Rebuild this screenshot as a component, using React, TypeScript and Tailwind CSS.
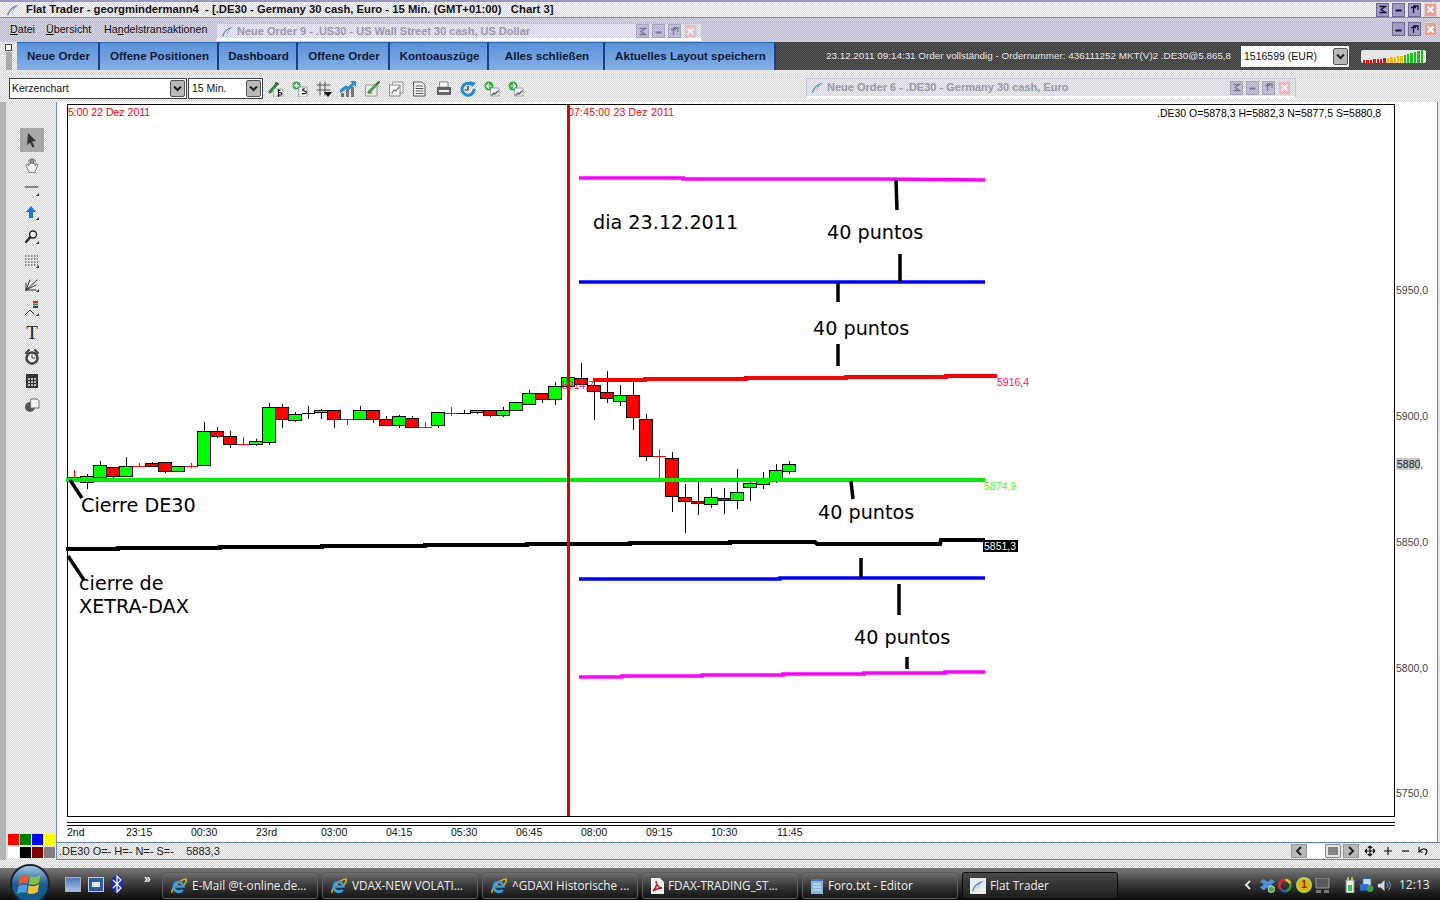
import React from "react";

const dGray = "bg-[image:repeating-conic-gradient(#d4d4d4_0_25%,#f6f6f6_0_50%)] bg-[length:2px_2px]";
const dLav = "bg-[image:repeating-conic-gradient(#b4b4d6_0_25%,#dcdcec_0_50%)] bg-[length:2px_2px]";
const dTitle = "bg-[image:repeating-conic-gradient(#d6d6e4_0_25%,#fafafc_0_50%)] bg-[length:2px_2px]";
const dMini = "bg-[image:repeating-conic-gradient(#d0d0e0_0_25%,#f0f0f6_0_50%)] bg-[length:2px_2px]";
const dDark = "bg-[image:repeating-conic-gradient(#383838_0_25%,#5c5c5c_0_50%)] bg-[length:2px_2px]";
const sans = "font-['Liberation_Sans',Arial,sans-serif]";

const Z5: number[][] = [
  [43, 352, 352, 330, 352, 2], [82, 349, 367, 342, 386, 1], [120, 314, 349, 304, 352, 1], [160, 320, 347, 320, 353, 0],
  [198, 317, 346, 292, 346, 1], [238, 317, 317, 309, 321, 2], [276, 310, 319, 307, 319, 0], [315, 307, 334, 307, 338, 0],
  [354, 319, 334, 319, 334, 1], [394, 317, 317, 310, 325, 2], [432, 214, 316, 186, 316, 1], [472, 214, 229, 202, 233, 0],
  [511, 229, 253, 213, 263, 0], [550, 253, 253, 232, 253, 2], [589, 244, 253, 238, 257, 1], [628, 142, 247, 129, 254, 1],
  [667, 142, 178, 132, 203, 0], [706, 161, 178, 156, 185, 1], [745, 158, 159, 138, 177, 3], [784, 151, 158, 148, 176, 1],
  [822, 151, 178, 151, 203, 0], [862, 178, 178, 178, 194, 2], [901, 151, 178, 138, 178, 1], [940, 151, 178, 151, 188, 0],
  [979, 178, 196, 168, 196, 0], [1018, 169, 196, 165, 203, 1], [1057, 175, 202, 168, 202, 0], [1096, 202, 202, 186, 202, 2],
  [1135, 157, 196, 157, 203, 1],
];
const Z6: number[][] = [
  [34, 173, 173, 156, 182, 2], [73, 173, 174, 165, 176, 3], [112, 166, 173, 166, 176, 1], [151, 166, 181, 166, 185, 0],
  [190, 166, 181, 155, 186, 1], [229, 142, 166, 142, 166, 1], [268, 115, 148, 105, 148, 1], [307, 115, 133, 115, 143, 0],
  [346, 94, 133, 82, 149, 1], [385, 67, 94, 67, 94, 1], [424, 70, 88, 24, 88, 0], [463, 91, 109, 70, 194, 0],
  [502, 112, 130, 48, 143, 0], [541, 121, 139, 90, 152, 1], [580, 121, 187, 82, 224, 0], [619, 193, 304, 178, 317, 0],
  [658, 304, 304, 283, 370, 2], [697, 310, 424, 292, 470, 0], [736, 427, 439, 387, 533, 0], [775, 439, 445, 380, 479, 0],
  [814, 427, 448, 400, 458, 1], [853, 430, 436, 400, 476, 0], [892, 412, 436, 343, 461, 1], [931, 385, 397, 380, 437, 1],
  [970, 370, 388, 352, 401, 1], [1009, 346, 370, 327, 383, 1], [1048, 328, 349, 319, 356, 1],
];
const candles = [
  ...Z5.map((c) => ({ x: 60 + c[0] / 3, o: 360 + c[1] / 3, c: 360 + c[2] / 3, h: 360 + c[3] / 3, l: 360 + c[4] / 3, k: c[5] })),
  ...Z6.map((c) => ({ x: 440 + c[0] / 3, o: 355 + c[1] / 3, c: 355 + c[2] / 3, h: 355 + c[3] / 3, l: 355 + c[4] / 3, k: c[5] })),
];

function Candle({ d }: { d: (typeof candles)[number] }) {
  const x = Math.round(d.x) + 0.5;
  if (d.k >= 2) {
    const col = d.k === 2 ? "#ff0000" : "#000000";
    return (
      <g stroke={col} strokeWidth={1} shapeRendering="crispEdges">
        <line x1={x} x2={x} y1={d.h} y2={d.l} />
        <line x1={x - 7} x2={x + 6} y1={Math.round(d.o) + 0.5} y2={Math.round(d.o) + 0.5} />
      </g>
    );
  }
  return (
    <g stroke="#000" strokeWidth={1} shapeRendering="crispEdges">
      <line x1={x} x2={x} y1={d.h} y2={d.l} />
      <rect x={x - 7} y={Math.round(d.o) + 0.5} width={13} height={Math.max(1, Math.round(d.c - d.o))} fill={d.k === 1 ? "#00ff00" : "#ff0000"} />
    </g>
  );
}

const ticks = [
  [896, 180, 897, 210], [900, 254, 900, 281], [838, 283, 838, 302], [838, 344, 838, 366], [851, 481, 853, 499],
  [861, 558, 861, 577], [899, 584, 899, 615], [907, 657, 907, 669], [70, 480, 82, 498], [68, 556, 84, 580],
];
const notes: [number, number, string][] = [
  [593, 229, "dia 23.12.2011"], [827, 239, "40 puntos"], [813, 335, "40 puntos"], [81, 512, "Cierre DE30"], [818, 519, "40 puntos"],
  [79, 590, "cierre de"], [79, 613, "XETRA-DAX"], [854, 644, "40 puntos"],
];
const axisY: [number, string][] = [[290, "5950,0"], [416, "5900,0"], [542, "5850,0"], [668, "5800,0"], [793, "5750,0"]];
const axisX: [number, string][] = [
  [67, "2nd"], [126, "23:15"], [191, "00:30"], [256, "23rd"], [321, "03:00"], [386, "04:15"], [451, "05:30"], [516, "06:45"], [581, "08:00"],
  [646, "09:15"], [711, "10:30"], [777, "11:45"],
];

function Chart() {
  const t = { fontFamily: "'Liberation Sans',Arial,sans-serif", fontSize: 10.5 };
  return (
    <svg viewBox="57 102 1380 740" className="block w-[1380px] h-[740px] bg-white">
      <rect x={67.5} y={104.5} width={1327} height={712} fill="#fff" stroke="#000" shapeRendering="crispEdges" />
      <line x1={67} x2={1395} y1={822.5} y2={822.5} stroke="#000" shapeRendering="crispEdges" />
      <line x1={67} x2={1395} y1={825.5} y2={825.5} stroke="#000" shapeRendering="crispEdges" />
      <text x={68} y={116} fill="#ff0000" style={t}>5:00 22 Dez 2011</text>
      <text x={568} y={116} fill="#ff0000" style={t} textLength={106}>07:45:00 23 Dez 2011</text>
      <text x={1157} y={117} fill="#000" style={t}>.DE30 O=5878,3 H=5882,3 N=5877,5 S=5880,8</text>
      {candles.map((d, i) => <Candle key={i} d={d} />)}
      <text x={562} y={389} fill="#ff1050" style={t}>5914,7</text>
      <polyline points="579,178 683,178 683,179 885,179 985,180" fill="none" stroke="#ff00ff" strokeWidth={3.5} />
      <line x1={579} x2={985} y1={282} y2={282} stroke="#0000ff" strokeWidth={3.5} />
      <polyline points="593,380 645,380 645,379 746,379 746,378 846,378 846,377 946,377 946,376 997,376" fill="none" stroke="#ff0000" strokeWidth={4} />
      <line x1={66} x2={985} y1={480} y2={480} stroke="#00ee00" strokeWidth={4} />
      <polyline points="66,549 118,549 118,548 220,548 220,547 322,547 322,546 425,546 425,545 527,545 527,544 630,544 630,543 730,543 730,542 815,542 817,544 940,544 941,540 985,540" fill="none" stroke="#000" strokeWidth={4} />
      <polyline points="579,579 780,579 780,578 985,578" fill="none" stroke="#0000ff" strokeWidth={3.5} />
      <polyline points="579,677 622,677 622,676 702,676 702,675 783,675 783,674 864,674 864,673 945,673 945,672 985,672" fill="none" stroke="#ff00ff" strokeWidth={3.5} />
      <line x1={568.5} x2={568.5} y1={105} y2={816} stroke="#e60000" strokeWidth={3} />
      {ticks.map((p, i) => <line key={i} x1={p[0]} y1={p[1]} x2={p[2]} y2={p[3]} stroke="#000" strokeWidth={3.5} />)}
      {notes.map(([x, y, s], i) => (
        <text key={i} x={x} y={y} fill="#000" style={{ fontFamily: "'DejaVu Sans',Verdana,sans-serif", fontSize: 19.2 }}>{s}</text>
      ))}
      <text x={997} y={386} fill="#ff1050" style={t}>5916,4</text>
      <text x={984} y={490} fill="#33ff33" style={t}>5874,9</text>
      <rect x={983} y={540} width={35} height={12} fill="#000" />
      <text x={984} y={550} fill="#fff" style={t}>5851,3</text>
      <rect x={1396} y={458} width={24} height={12} fill="#c8c8c8" />
      <text x={1397} y={468} fill="#222" style={t}>5880,</text>
      {axisY.map(([y, s]) => <text key={s} x={1396} y={y + 4} fill="#444" style={t}>{s}</text>)}
      {axisX.map(([x, s]) => <text key={s} x={x} y={836} fill="#111" style={t}>{s}</text>)}
    </svg>
  );
}

function WinBtn({ kind }: { kind: "menu" | "min" | "max" | "close" }) {
  const cls = kind === "close" ? "bg-[#f09c90] border-[#d8d0d0] text-white" : "bg-[#9c9cc4] border-[#6c6c90] text-[#14143a]";
  return (
    <div className={`w-[13px] h-[14px] border flex items-center justify-center ${cls}`}>
      <svg viewBox="0 0 9 9" className="w-[9px] h-[9px]" fill="none" stroke="currentColor" strokeWidth="1.300">
        {kind === "menu" && <path d="M1.500 1.500h6L3 4.500l4.500 3h-6" />}
        {kind === "min" && <path d="M1.500 5.500h6" strokeWidth="2" />}
        {kind === "max" && <path d="M1 2.500h5M3.500 2.500v5.500M3 1h5v4" />}
        {kind === "close" && <path d="M1.500 1.500l6 6M7.500 1.500l-6 6" strokeWidth="2" />}
      </svg>
    </div>
  );
}

function Chevron() {
  return (
    <div className="w-[15px] h-[17px] rounded-[2px] border border-[#555] bg-[#b8b8b8] flex items-center justify-center">
      <svg viewBox="0 0 9 7" className="w-[9px] h-[7px]" fill="none" stroke="#222" strokeWidth="2"><path d="M1 1.500l3.500 3.500L8 1.500" /></svg>
    </div>
  );
}

function MiniWindow({ title, className }: { title: string; className: string }) {
  return (
    <div className={`flex items-center border border-[#c8c8dc] border-b-[3px] border-b-white pl-1 pr-[4px] ${dMini} ${className}`}>
      <Logo size={13} />
      <span className={`ml-[3px] flex-1 text-[11px] font-bold text-[#9a9aa4] whitespace-nowrap ${sans}`}>{title}</span>
      <div className="flex gap-[3px] opacity-50">
        <WinBtn kind="menu" /><WinBtn kind="min" /><WinBtn kind="max" /><WinBtn kind="close" />
      </div>
    </div>
  );
}

function Logo({ size }: { size: number }) {
  return (
    <svg viewBox="0 0 16 16" width={size} height={size} className="shrink-0">
      <path d="M1 14C3 8 7 3 15 2 10 5 8 8 7 14 7 10 8 7 10 5 6 7 4 10 3 14z" fill="#6f8db8" />
    </svg>
  );
}

const tabs: [string, string][] = [
  ["Neue Order", "w-[83px]"], ["Offene Positionen", "w-[119px]"], ["Dashboard", "w-[79px]"], ["Offene Order", "w-[92px]"],
  ["Kontoauszüge", "w-[99px]"], ["Alles schließen", "w-[116px]"], ["Aktuelles Layout speichern", "w-[171px]"],
];

const I = ({ children, className = "" }: { children: React.ReactNode; className?: string }) => (
  <svg viewBox="0 0 16 16" className={`w-4 h-4 shrink-0 ${className}`} fill="none" strokeLinecap="round" strokeLinejoin="round">{children}</svg>
);

const barIcons = [
  <I key="0"><path d="M2 11l6-7" stroke="#2c8c3c" strokeWidth="3" /><path d="M8 2l2 1" stroke="#555" strokeWidth="2" /><path d="M6 8h9v8H6z" fill="#f2f2f2" stroke="#999" strokeWidth=".7" /><path d="M12 9.500c-2.500-.5-2.500 2 0 2.200s2.500 2.500 0 2.500-1.500 0-2 0M10.500 8.500v7" stroke="#222" strokeWidth="1.200" /></I>,
  <I key="1"><circle cx="4.500" cy="4.500" r="4" fill="#30b040" /><path d="M4.500 2.500v4M2.500 4.500h4" stroke="#fff" strokeWidth="1.400" /><path d="M7 6h8v10H7z" fill="#f0f0f0" stroke="#888" strokeWidth=".7" /><path d="M12.500 8c-2.500-.5-2.500 2 0 2.200s2.500 2.500 0 2.500-1.500 0-2 0" stroke="#222" strokeWidth="1.200" /></I>,
  <I key="2"><path d="M4 1v13M9 1v13M1 4h13M1 9h13" stroke="#555" /><path d="M8 11h8l-4 5z" fill="#111" /></I>,
  <I key="3"><path d="M1 16v-4h3v4zM6 16V9h3v7zM11 16V6h3v10z" fill="#777" /><path d="M1 10l5-4 2 2 5-5" stroke="#2090e0" strokeWidth="3" /><path d="M10 0h6v6z" fill="#2090e0" /></I>,
  <I key="4"><path d="M2 4h11v11H2z" fill="#efefef" stroke="#999" /><path d="M5 11l8-8" stroke="#40a840" strokeWidth="3" /><path d="M13 3l2-2" stroke="#555" strokeWidth="2" /><path d="M4 12h4" stroke="#666" /></I>,
  <I key="5"><path d="M5 1h10v11H5z" fill="#f4f4f4" stroke="#999" /><path d="M2 4h10v11H2z" fill="#f8f8f8" stroke="#888" /><path d="M4 12l2-3 2 1 3-4" stroke="#666" strokeWidth="1.200" /></I>,
  <I key="6"><path d="M2 1h8l3 3v11H2z" fill="#fafafa" stroke="#555" /><path d="M4 5h7M4 7.500h7M4 10h7M4 12.500h7" stroke="#555" /></I>,
  <I key="7"><path d="M4 1h8v5H4z" fill="#fff" stroke="#888" /><path d="M1 6h14v8H1z" fill="#666" /><path d="M3 9h10v2H3z" fill="#eee" /></I>,
  <I key="8"><path d="M14 9a6 6 0 1 1-3-6" stroke="#1c8ce0" strokeWidth="3" /><path d="M10 0l6 2-4 4z" fill="#1c8ce0" /><path d="M8 5v4H5" stroke="#333" strokeWidth="1.200" /></I>,
  <I key="9"><circle cx="5" cy="5" r="4.500" fill="#30b040" /><path d="M7 5H3M4.500 3l-2 2 2 2" stroke="#fff" strokeWidth="1.200" /><path d="M7 7h8v8H7z" fill="#f0f0f0" stroke="#888" strokeWidth=".7" /><path d="M8 14l2-2 1 1 3-3" stroke="#555" strokeWidth="1.200" /></I>,
  <I key="10"><circle cx="5" cy="5" r="4.500" fill="#30b040" /><path d="M3 5h4M5.500 3l2 2-2 2" stroke="#fff" strokeWidth="1.200" /><path d="M7 7h8v8H7z" fill="#f0f0f0" stroke="#888" strokeWidth=".7" /><path d="M8 14l2-2 1 1 3-3" stroke="#555" strokeWidth="1.200" /></I>,
];

const toolIcons = [
  <I key="0"><path d="M4 1l8 8-4 .5 2.500 5-2 1-2.500-5L3 13z" fill="#333" /></I>,
  <I key="1"><path d="M5 15L2 8l2-1 1 2V3h1.500v4V2H8v5V2h1.500v5V3H11v6l1.500-2 1.500.5-3 7.500z" fill="#f4f4f4" stroke="#666" strokeWidth=".8" /></I>,
  <I key="2"><path d="M1 6h13" stroke="#222" /><path d="M15 15h-3l3-3z" fill="#333" /></I>,
  <I key="3"><path d="M7 1l5 6H9v6H5V7H2z" fill="#1478e8" /><path d="M15 15h-3l3-3z" fill="#333" /></I>,
  <I key="4"><circle cx="9" cy="5.500" r="3.500" fill="#fff" stroke="#222" strokeWidth="1.400" /><path d="M6.500 8L2 13" stroke="#222" strokeWidth="2.200" /><path d="M15 15h-3l3-3z" fill="#333" /></I>,
  <I key="5"><path d="M1 3h13M1 6h13M1 9h13M1 12h13" stroke="#333" strokeDasharray="1.500 1.500" strokeLinecap="butt" /><path d="M15 15h-3l3-3z" fill="#333" /></I>,
  <I key="6"><path d="M2 13L13 3M2 13l10-5M2 13l10 0M2 13l4-10M2 13V6" stroke="#333" /><path d="M15 15h-3l3-3z" fill="#333" /></I>,
  <I key="7"><path d="M9 1h5" stroke="#e02020" strokeWidth="2" strokeLinecap="butt" /><path d="M9 3.500h5" stroke="#20a040" strokeWidth="2" strokeLinecap="butt" /><path d="M9 6h5" stroke="#2040e0" strokeWidth="2" strokeLinecap="butt" /><path d="M1 14l5-5 4 4" stroke="#333" /><path d="M15 15h-3l3-3z" fill="#333" /></I>,
  <span key="8" className="text-[19px] leading-4 font-['Liberation_Serif',serif] text-[#222]">T</span>,
  <I key="9"><circle cx="8" cy="9" r="5.500" fill="#eee" stroke="#444" strokeWidth="2.500" /><path d="M2 4l3-3M14 4l-3-3" stroke="#444" strokeWidth="2" /><path d="M8 6v3h3" stroke="#444" /></I>,
  <I key="10"><path d="M2 1h12v14H2z" fill="#333" /><path d="M4 5h2v2H4zM7 5h2v2H7zM10 5h2v2h-2zM4 8h2v2H4zM7 8h2v2H7zM10 8h2v2h-2zM4 11h2v2H4zM7 11h2v2H7zM10 11h2v2h-2z" fill="#bbb" /></I>,
  <I key="11"><circle cx="6" cy="10" r="5" fill="#555" /><path d="M7 2h6l2 2v7H7z" fill="#f4f4f4" stroke="#777" /></I>,
];

const swatches = ["bg-[#ff0000]", "bg-[#008000]", "bg-[#0000ff]", "bg-[#ffff00]", "bg-white", "bg-black", "bg-[#800000]", "bg-[#808080]"];

function IE() {
  return (
    <svg viewBox="0 0 18 18" className="w-[18px] h-[18px] shrink-0" fill="none">
      <path d="M2 16C1 13 8 3 16 2c1 2-1 5-3 7" stroke="#e8b020" strokeWidth="1.500" />
      <path d="M4 9.500h9.500a5 5 0 1 0-1 3.500" stroke="#3a9ce8" strokeWidth="2.400" />
      <path d="M4 9.500a5 5 0 0 0 8 4" stroke="#3a9ce8" strokeWidth="2.400" />
    </svg>
  );
}

function TaskBtn({ label, icon, active }: { label: string; icon: React.ReactNode; active?: boolean }) {
  return (
    <div className={`w-[156px] h-[27px] rounded-[3px] border flex items-center gap-[4px] pl-[7px] overflow-hidden ${active ? "border-[#0c0c0c] bg-gradient-to-b from-[#4a4a4a] to-[#1e1e1e]" : "border-[#5c5c5c] bg-gradient-to-b from-[#6e6e6e] via-[#3a3a3a] to-[#161616]"}`}>
      {icon}
      <span className="text-[11.7px] text-[#eeeeee] font-['Open_Sans',sans-serif] whitespace-nowrap">{label}</span>
    </div>
  );
}

export default function App() {
  return (
    <div className={`w-[1440px] h-[900px] overflow-hidden flex flex-col ${sans} bg-[#e8e8e8]`}>
      {/* title bar */}
      <div className={`h-[18px] shrink-0 flex items-center pl-[6px] pr-[3px] border-t-2 border-t-[#9a9ac8] border-b border-b-[#8c8c9c] ${dTitle}`}>
        <Logo size={14} />
        <span className="ml-[6px] flex-1 text-[11.27px] font-bold text-[#111] whitespace-pre">Flat Trader - georgmindermann4  - [.DE30 - Germany 30 cash, Euro - 15 Min. (GMT+01:00)   Chart 3]</span>
        <div className="flex gap-[3px]"><WinBtn kind="menu" /><WinBtn kind="min" /><WinBtn kind="max" /><WinBtn kind="close" /></div>
      </div>
      {/* menu row */}
      <div className={`h-[24px] shrink-0 flex items-center pl-[10px] pr-[3px] ${dLav}`}>
        <span className="w-[36px] -mt-[2px] text-[10.7px] text-[#111]"><u>D</u>atei</span>
        <span className="w-[58px] -mt-[2px] text-[10.7px] text-[#111]"><u>Ü</u>bersicht</span>
        <span className="w-[112px] -mt-[2px] text-[10.7px] text-[#111]">Ha<u>n</u>delstransaktionen</span>
        <MiniWindow title="Neue Order 9 - .US30 - US Wall Street 30 cash, US Dollar" className="w-[486px] h-[18px] mt-[4px]" />
        <div className="flex-1" />
        <div className="flex gap-[3px] -mt-[2px]"><WinBtn kind="min" /><WinBtn kind="max" /><WinBtn kind="close" /></div>
      </div>
      {/* tab bar */}
      <div className={`h-[28px] shrink-0 flex items-stretch ${dDark}`}>
        <div className={`w-[17px] flex flex-col items-center ${dGray}`}>
          <span className="w-[7px] h-[7px] mt-[2px] border border-[#444] bg-white" />
          <span className="w-[6px] flex-1 mt-[1px] bg-[#aaa]" />
        </div>
        {tabs.map(([t, w]) => (
          <div key={t} className={`${w} pl-[2px] pb-[2px] rounded-t-[2px] border-r-2 border-r-[#14408c] border-t border-t-[#2a68b8] bg-gradient-to-b from-[#5a90d8] to-[#86aee6] flex items-center justify-center text-[11.6px] font-bold text-[#0c1c38] whitespace-nowrap`}>{t}</div>
        ))}
        <span className="w-[465px] pl-[50px] pt-[7px] text-[9.85px] text-[#e6e6e6] whitespace-nowrap">23.12.2011 09:14:31 Order vollständig - Ordernummer: 436111252 MKT(V)2 .DE30@5.865,8</span>
        <div className="w-[108px] h-[21px] mt-[4px] bg-white flex items-center justify-between pl-[3px] pr-[1px]">
          <span className="text-[10.5px] text-[#111]">1516599 (EUR)</span>
          <Chevron />
        </div>
        <div className="ml-[12px] mt-[8px] w-[65px] h-[13px] rounded-[2px] bg-[#e8e8e8] flex items-end gap-[1px] px-[2px]">
          {[3, 3, 3, 4, 4, 4, 5, 5, 6, 6, 7, 7, 8, 9, 10, 11, 12, 13].map((h, i) => (
            <span key={i} className={`w-[2.4px] ${i < 7 ? "bg-[#e01818]" : i < 12 ? "bg-[#f0c000]" : "bg-[#20c020]"}`} style={{ height: h }} />
          ))}
        </div>
      </div>
      {/* spacer strip */}
      <div className={`h-[5px] shrink-0 ${dGray}`} />
      {/* tool row */}
      <div className={`h-[27px] shrink-0 flex items-center pl-[9px] ${dGray}`}>
        <div className="w-[178px] h-[21px] bg-white border border-[#444] flex items-center justify-between pl-[2px] pr-[1px]">
          <span className="text-[10.5px] text-[#111]">Kerzenchart</span><Chevron />
        </div>
        <div className="ml-[1px] w-[75px] h-[21px] bg-white border border-[#444] flex items-center justify-between pl-[3px] pr-[1px]">
          <span className="text-[10.5px] text-[#111]">15 Min.</span><Chevron />
        </div>
        <div className="ml-[5px] w-[260px] flex gap-[8px]">{barIcons}</div>
        <MiniWindow title="Neue Order 6 - .DE30 - Germany 30 cash, Euro" className="ml-[278px] w-[490px] h-[21px]" />
      </div>
      {/* main */}
      <div className="h-[758px] shrink-0 flex">
        <div className={`w-[57px] shrink-0 flex flex-col items-stretch border-r border-r-[#6a8cc4] border-l-[6px] border-l-[#b4b4b4] ${dGray}`}>
          <div className="ml-[14px] mt-[26px] w-[24px] h-[24px] bg-[#a8a8a8] flex items-center justify-center">{toolIcons[0]}</div>
          <div className="ml-[18px] mt-[5px] flex flex-col items-center w-4 gap-[8px]">{toolIcons.slice(1)}</div>
          <div className="flex-1" />
          <div className="ml-[2px] mb-[2px] grid grid-cols-4 gap-x-[1px] gap-y-[2px] w-[47px]">
            {swatches.map((s, i) => <span key={i} className={`h-[11px] ${s}`} />)}
          </div>
        </div>
        <div className="flex-1 flex flex-col">
          <div className="flex">
            <Chart />
            <div className={`flex-1 border-l border-l-[#7088ac] ${dGray}`} />
          </div>
          <div className={`h-[18px] border-y border-[#6a86ac] flex items-center pl-[2px] pr-[10px] ${dGray}`}>
            <span className="text-[11px] text-[#222] whitespace-pre">.DE30 O=- H=- N=- S=-    5883,3</span>
            <div className="flex-1" />
            <div className="flex items-center">
              <div className="w-[16px] h-[14px] bg-[#b8b8b8] border border-[#999] flex items-center justify-center">
                <svg viewBox="0 0 8 10" className="w-[8px] h-[10px]" fill="none" stroke="#222" strokeWidth="2"><path d="M6 1L2 5l4 4" /></svg>
              </div>
              <div className="w-[18px] h-[14px] bg-white" />
              <div className="w-[16px] h-[14px] bg-[#e4e4e4] border border-[#888] rounded-[2px] flex items-center justify-center">
                <svg viewBox="0 0 10 8" className="w-[10px] h-[8px]" stroke="#222"><path d="M1 0v8M3 0v8M5 0v8M7 0v8M9 0v8" /></svg>
              </div>
              <div className="ml-[2px] w-[16px] h-[14px] bg-[#b8b8b8] border border-[#999] flex items-center justify-center">
                <svg viewBox="0 0 8 10" className="w-[8px] h-[10px]" fill="none" stroke="#222" strokeWidth="2"><path d="M2 1l4 4-4 4" /></svg>
              </div>
              <svg viewBox="0 0 66 12" className="ml-[5px] w-[66px] h-[12px]" fill="none" stroke="#111" strokeWidth="1.200">
                <path d="M6 1v10M1 6h10M6 1L4 3M6 1l2 2M6 11L4 9M6 11l2-2M1 6l2-2M1 6l2 2M11 6L9 4M11 6L9 8" />
                <path d="M24 2v8M20 6h8" />
                <path d="M38 6h7" />
                <path d="M55 2v5h4M55 7c3-4 7-4 8-1 0 2-1 3-2 4" />
              </svg>
            </div>
          </div>
        </div>
      </div>
      {/* strip */}
      <div className={`h-[8px] shrink-0 ${dGray}`} />
      {/* taskbar */}
      <div className="flex-1 min-h-0 bg-gradient-to-b from-[#7a7a7a] via-[#3a3a3a] to-[#0a0a0a] flex items-center">
        <div className="ml-[10px] -my-[5px] w-[40px] h-[40px] rounded-full bg-gradient-to-b from-[#a0c8e4] via-[#1c5c94] to-[#0c5c84] border-2 border-[#1c2430] flex items-center justify-center shrink-0">
          <svg viewBox="0 0 20 20" className="w-[26px] h-[26px]">
            <path d="M2 5c2-2 5-2 7-1l-1 6c-2-1-5-1-7 1z" fill="#e85830" />
            <path d="M10 4c2 1 5 1 8-1l-1 6c-3 2-6 2-8 1z" fill="#80c040" />
            <path d="M1 12c2-2 5-2 7-1l-1 6c-2-1-5-1-7 1z" fill="#4aa0e8" />
            <path d="M9 11c2 1 5 1 8-1l-1 6c-3 2-6 2-8 1z" fill="#f0c030" />
          </svg>
        </div>
        <div className="ml-[15px] w-[97px] flex items-center gap-[7px] shrink-0">
          <div className="w-[16px] h-[15px] bg-gradient-to-b from-[#5078b8] to-[#a8c0e0] border border-[#aab]" />
          <div className="w-[16px] h-[15px] bg-[#2c5c9c] border border-[#ccd] flex items-center justify-center">
            <span className="w-[8px] h-[5px] bg-[#d8e4f4]" />
          </div>
          <svg viewBox="0 0 12 18" className="w-[12px] h-[18px]"><ellipse cx="6" cy="9" rx="6" ry="9" fill="#1c2cb0" /><path d="M2 5l8 8-4 4V1l4 4-8 8" fill="none" stroke="#f0f4ff" strokeWidth="1.300" /></svg>
          <span className="text-[12px] font-bold text-white -mt-[10px] ml-[14px]">»</span>
        </div>
        <div className="flex gap-[4px] shrink-0 mt-[3px]">
          <TaskBtn label="E-Mail @t-online.de..." icon={<IE />} />
          <TaskBtn label="VDAX-NEW VOLATI..." icon={<IE />} />
          <TaskBtn label="^GDAXI Historische ..." icon={<IE />} />
          <TaskBtn label="FDAX-TRADING_ST..." icon={<svg viewBox="0 0 14 16" className="w-[14px] h-[16px] shrink-0"><path d="M1 0h9l4 4v12H1z" fill="#f4f4f4" /><path d="M3 13C6 10 7 6 6 3c0 4 3 7 6 7-3 0-6 1-9 3z" fill="none" stroke="#d01010" strokeWidth="1.500" /></svg>} />
          <TaskBtn label="Foro.txt - Editor" icon={<svg viewBox="0 0 14 16" className="w-[14px] h-[16px] shrink-0"><path d="M1 1h12v15H1z" fill="#88b4e0" /><path d="M1 1h12v2H1z" fill="#4878b0" /><path d="M3 6h8M3 9h8M3 12h8" stroke="#e4f0fc" /></svg>} />
          <TaskBtn active label="Flat Trader" icon={<span className="w-[16px] h-[16px] bg-[#e8ecf4] flex items-center justify-center shrink-0"><Logo size={14} /></span>} />
        </div>
        <div className="ml-[126px] flex items-center gap-[3px] shrink-0 mt-[2px]">
          <svg viewBox="0 0 8 10" className="w-[8px] h-[10px] mr-[5px]" fill="none" stroke="#ddd" strokeWidth="2"><path d="M6 1L2 5l4 4" /></svg>
          <svg viewBox="0 0 16 16" className="w-[15px] h-[15px]"><path d="M4 1l4 3 4-3 4 3-4 3 4 3-4 3-4-3-4 3-4-3 4-3-4-3z" fill="#5090d8" /><circle cx="12" cy="12" r="3.500" fill="#40b040" stroke="#fff" strokeWidth=".7" /></svg>
          <svg viewBox="0 0 16 16" className="w-[15px] h-[15px]" fill="none" strokeWidth="2.800"><path d="M3 12A6 6 0 0 1 8 2" stroke="#e02828" /><path d="M8 2a6 6 0 0 1 5 4" stroke="#f0c020" /><path d="M13 6a6 6 0 0 1-5 8" stroke="#30a030" /><path d="M8 14a6 6 0 0 1-5-2" stroke="#2060d0" /></svg>
          <span className="w-[16px] h-[16px] rounded-full bg-[#f0a818] border-2 border-[#a8d848] text-[10px] leading-[12px] text-center font-bold text-[#703000]">1</span>
          <svg viewBox="0 0 15 15" className="w-[15px] h-[15px]"><path d="M1 0h13v10H1z" fill="#5a5a5a" stroke="#999" /><path d="M1 12h5v3H1zM9 12h5v3H9z" fill="#777" /></svg>
          <span className="w-[8px]" />
          <svg viewBox="0 0 12 16" className="w-[12px] h-[16px]"><path d="M2 3h8v13H2z" fill="#e8f0e8" stroke="#888" /><path d="M4 8h4v6H4z" fill="#40c040" /><path d="M4 0v3M8 0v3" stroke="#e8d040" strokeWidth="1.500" /></svg>
          <svg viewBox="0 0 16 16" className="w-[15px] h-[16px]"><path d="M4 1h9v8H4z" fill="#c8d8f0" stroke="#2050a0" /><path d="M1 7h9v7H1z" fill="#3070d0" /><circle cx="12" cy="12" r="3.500" fill="#40a040" /></svg>
          <svg viewBox="0 0 16 16" className="w-[15px] h-[15px]" fill="none"><path d="M1 6h3l4-4v12l-4-4H1z" fill="#d0d8e4" /><path d="M10 5c2 2 2 4 0 6M12 3c3 3 3 7 0 10" stroke="#60c0f0" /></svg>
          <span className="ml-[4px] text-[12px] text-[#e8e8e8] font-['Open_Sans',sans-serif]">12:13</span>
        </div>
      </div>
    </div>
  );
}
